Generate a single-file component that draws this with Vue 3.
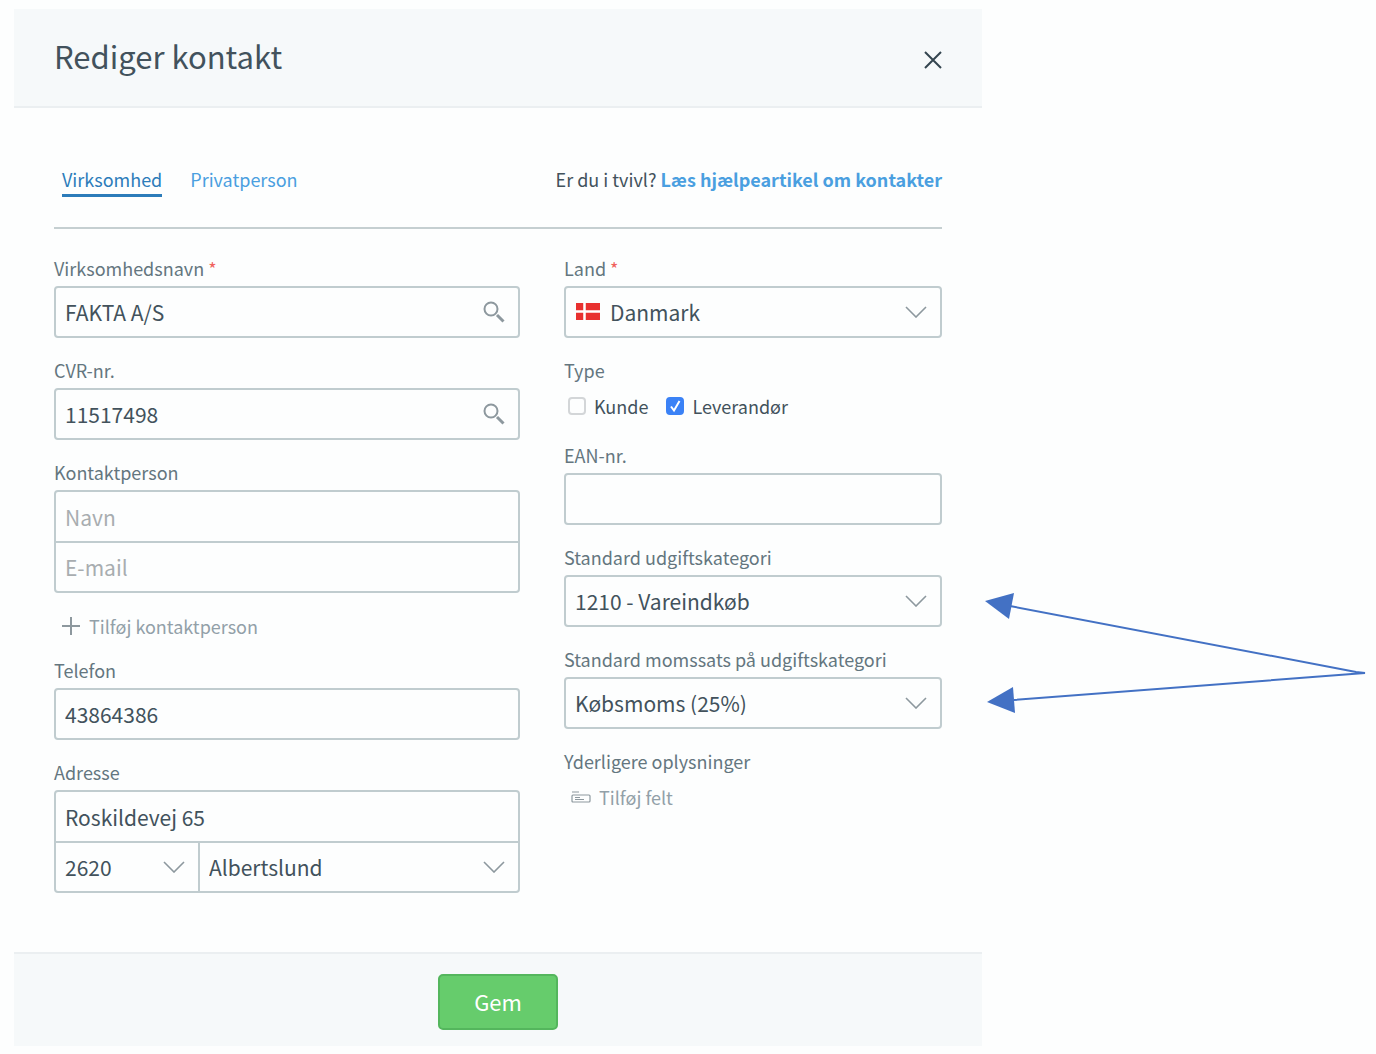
<script setup>
import { ref } from "vue";

const tab = ref("virksomhed");

const contact = ref({
    name: "FAKTA A/S",
    cvr: "11517498",
    person: "",
    email: "",
    phone: "43864386",
    street: "Roskildevej 65",
    zip: "2620",
    city: "Albertslund",
    country: "Danmark",
    customer: false,
    supplier: true,
    ean: "",
    category: "1210 - Vareindkøb",
    vat: "Købsmoms (25%)"
})
</script>

<template>
    <div class="page">
        <form class="dialog" @submit.prevent>
            <header class="dialog-header">
                <h1>Rediger kontakt</h1>
                <button type="button" class="close" aria-label="Luk">
                    <svg width="18" height="18" viewBox="0 0 18 18"><path d="M1 1L17 17M17 1L1 17" /></svg>
                </button>
            </header>

            <div class="dialog-body">
                <div class="top-bar">
                    <nav class="tabs">
                        <a href="#virksomhed" :class="{ active: tab === 'virksomhed' }" @click.prevent="tab = 'virksomhed'">Virksomhed</a>
                        <a href="#privatperson" :class="{ active: tab === 'privatperson' }" @click.prevent="tab = 'privatperson'">Privatperson</a>
                    </nav>
                    <p class="help">Er du i tvivl? <a href="#hjaelp">Læs hjælpeartikel om kontakter</a></p>
                </div>

                <div class="columns">
                    <div class="column">
                        <div class="field">
                            <label for="name">Virksomhedsnavn <span class="required">*</span></label>
                            <div class="control">
                                <input id="name" type="text" v-model="contact.name">
                                <svg class="icon" width="22" height="22" viewBox="0 0 22 22"><circle cx="8" cy="8" r="6.5" /><path class="handle" d="M14 14L20.5 20.5" /></svg>
                            </div>
                        </div>

                        <div class="field">
                            <label for="cvr">CVR-nr.</label>
                            <div class="control">
                                <input id="cvr" type="text" v-model="contact.cvr">
                                <svg class="icon" width="22" height="22" viewBox="0 0 22 22"><circle cx="8" cy="8" r="6.5" /><path class="handle" d="M14 14L20.5 20.5" /></svg>
                            </div>
                        </div>

                        <div class="field">
                            <label for="person">Kontaktperson</label>
                            <div class="group">
                                <input id="person" type="text" placeholder="Navn" v-model="contact.person">
                                <input type="email" placeholder="E-mail" aria-label="E-mail" v-model="contact.email">
                            </div>
                        </div>

                        <button type="button" class="add">
                            <svg width="20" height="20" viewBox="0 0 20 20"><path d="M10 1V19M1 10H19" /></svg>
                            Tilføj kontaktperson
                        </button>

                        <div class="field">
                            <label for="phone">Telefon</label>
                            <div class="control">
                                <input id="phone" type="tel" v-model="contact.phone">
                            </div>
                        </div>

                        <div class="field">
                            <label for="street">Adresse</label>
                            <div class="group">
                                <input id="street" type="text" v-model="contact.street">
                                <div class="city-row">
                                    <div class="control">
                                        <select aria-label="Postnummer" v-model="contact.zip"><option>2620</option></select>
                                        <svg class="icon chevron" width="22" height="12" viewBox="0 0 22 12"><path d="M1 1L11 11L21 1" /></svg>
                                    </div>
                                    <div class="control">
                                        <select aria-label="By" v-model="contact.city"><option>Albertslund</option></select>
                                        <svg class="icon chevron" width="22" height="12" viewBox="0 0 22 12"><path d="M1 1L11 11L21 1" /></svg>
                                    </div>
                                </div>
                            </div>
                        </div>
                    </div>

                    <div class="column">
                        <div class="field">
                            <label for="country">Land <span class="required">*</span></label>
                            <div class="control">
                                <svg class="flag" width="24" height="17" viewBox="0 0 24 17">
                                    <rect width="24" height="17" fill="#e8302f" />
                                    <path d="M8.5 0V17M0 8.5H24" stroke="#fff" stroke-width="2.5" />
                                </svg>
                                <select id="country" class="with-flag" v-model="contact.country"><option>Danmark</option></select>
                                <svg class="icon chevron" width="22" height="12" viewBox="0 0 22 12"><path d="M1 1L11 11L21 1" /></svg>
                            </div>
                        </div>

                        <fieldset class="field">
                            <legend>Type</legend>
                            <div class="checks">
                                <label><input type="checkbox" v-model="contact.customer"> Kunde</label>
                                <label><input type="checkbox" v-model="contact.supplier"> Leverandør</label>
                            </div>
                        </fieldset>

                        <div class="field">
                            <label for="ean">EAN-nr.</label>
                            <div class="control">
                                <input id="ean" type="text" v-model="contact.ean">
                            </div>
                        </div>

                        <div class="field">
                            <label for="category">Standard udgiftskategori</label>
                            <div class="control">
                                <select id="category" v-model="contact.category"><option>1210 - Vareindkøb</option></select>
                                <svg class="icon chevron" width="22" height="12" viewBox="0 0 22 12"><path d="M1 1L11 11L21 1" /></svg>
                            </div>
                        </div>

                        <div class="field">
                            <label for="vat">Standard momssats på udgiftskategori</label>
                            <div class="control">
                                <select id="vat" v-model="contact.vat"><option>Købsmoms (25%)</option></select>
                                <svg class="icon chevron" width="22" height="12" viewBox="0 0 22 12"><path d="M1 1L11 11L21 1" /></svg>
                            </div>
                        </div>

                        <div class="extra">
                            <h2>Yderligere oplysninger</h2>
                            <button type="button" class="add">
                                <svg class="thin" width="20" height="12" viewBox="0 0 20 12"><path d="M1 1H8M2 4H18Q19 4 19 5V10Q19 11 18 11H2Q1 11 1 10V5Q1 4 2 4ZM4 6.5H9M4 8.5H13" /></svg>
                                Tilføj felt
                            </button>
                        </div>
                    </div>
                </div>
            </div>

            <footer class="dialog-footer">
                <button type="submit" class="save">Gem</button>
            </footer>
        </form>

        <svg class="arrows" viewBox="0 0 394 140" aria-hidden="true">
            <path class="line" d="M28 26L374 92L383 93L32 120" />
            <path class="head" d="M3 21L32 13L27 39Z" />
            <path class="head" d="M5 122L31 107L33 133Z" />
        </svg>
    </div>
</template>

<style>
body {
    margin: 0;
    background: #fdfefe;
}
</style>

<style scoped>
.page {
    display: grid;
    grid-template-columns: 968fr 394fr;
    align-items: start;
    padding: 9px 0 8px 14px;
    font-family: "Noto Sans CJK SC", "Noto Sans", sans-serif;
    font-size: 18px;
    line-height: 24px;
    color: #42525c;
}

svg {
    flex: none;
    fill: none;
    stroke: #8d989e;
    stroke-width: 2;
}

.dialog-header {
    display: flex;
    align-items: center;
    justify-content: space-between;
    padding: 20px 40px 16px;
    background: #f6f9fa;
    border-bottom: 2px solid #ebeff1;
}

h1 {
    margin: 0;
    padding-bottom: 8px;
    font-size: 31px;
    line-height: 53px;
    font-weight: 400;
}

button {
    font: inherit;
    cursor: pointer;
}

.close {
    display: flex;
    padding: 0;
    border: 0;
    background: none;
}

.close svg {
    stroke: #34454f;
}

.dialog-body {
    padding: 59px 40px;
}

.top-bar {
    display: flex;
    justify-content: space-between;
    padding: 0 0 30px 8px;
    border-bottom: 2px solid #c5cfd1;
}

.tabs {
    display: flex;
    gap: 28px;
}

a {
    color: #4a9fe0;
    text-decoration: none;
}

.tabs a {
    padding-bottom: 3px;
    border-bottom: 3px solid transparent;
}

.tabs a.active {
    color: #2c7cba;
    border-color: #2c7cba;
}

.help {
    margin: 0;
}

.help a {
    font-weight: 700;
}

.columns {
    display: grid;
    grid-template-columns: 466fr 378fr;
    gap: 44px;
    padding-top: 27px;
}

.column {
    display: flex;
    flex-direction: column;
    gap: 20px;
    min-width: 0;
}

.field {
    display: flex;
    flex-direction: column;
    gap: 6px;
    min-width: 0;
    margin: 0;
    padding: 0;
    border: 0;
}

.field > label,
legend,
h2 {
    margin: 0;
    padding: 0;
    font-size: 18px;
    font-weight: 400;
    color: #64767f;
}

.required {
    color: #f0625d;
}

.control {
    position: relative;
    min-width: 0;
}

.control .icon {
    position: absolute;
    right: 15px;
    top: 50%;
    transform: translateY(-50%);
    pointer-events: none;
}

.control .chevron {
    stroke-width: 1.6;
}

.handle {
    stroke-width: 3;
}

.flag {
    position: absolute;
    left: 12px;
    top: 17px;
    stroke: none;
    pointer-events: none;
}

input[type="text"],
input[type="tel"],
input[type="email"],
select {
    display: block;
    width: 100%;
    height: 52px;
    margin: 0;
    padding: 0 9px;
    font: inherit;
    font-size: 21px;
    color: #42525c;
    background: transparent;
    border: 2px solid #c0cccf;
    border-radius: 4px;
    box-sizing: border-box;
    appearance: none;
}

select.with-flag {
    padding-left: 44px;
}

input::placeholder {
    color: #a8adb0;
    opacity: 1;
}

.group {
    border: 2px solid #c0cccf;
    border-radius: 4px;
}

.group input,
.group select {
    height: 49px;
    border: 0;
}

.group > input + input {
    height: 50px;
    border-top: 2px solid #c0cccf;
    border-radius: 0;
}

.city-row {
    display: grid;
    grid-template-columns: 142fr 320fr;
    border-top: 2px solid #c0cccf;
}

.city-row select {
    height: 48px;
}

.city-row .control + .control {
    border-left: 2px solid #c0cccf;
}

.city-row .icon {
    right: 13px;
}

.checks {
    display: flex;
    align-items: center;
    gap: 18px;
    height: 35px;
    padding: 6px 0 0 4px;
}

.checks label {
    display: flex;
    align-items: center;
    gap: 8px;
}

.checks input {
    width: 18px;
    height: 18px;
    margin: 0;
    border: 2px solid #d3d6d8;
    border-radius: 4px;
    appearance: none;
}

.checks input:checked {
    border-color: #3b82f6;
    background: #3b82f6 url("data:image/svg+xml,%3Csvg xmlns='http://www.w3.org/2000/svg' viewBox='0 0 14 14'%3E%3Cpath d='M3 7.5L6 11.5L11.5 2' fill='none' stroke='white' stroke-width='2'/%3E%3C/svg%3E") center / 14px 14px no-repeat;
}

.add {
    display: flex;
    align-items: center;
    align-self: flex-start;
    gap: 8px;
    height: 25px;
    padding: 0 0 0 7px;
    color: #92a0a8;
    background: none;
    border: 0;
}

.add svg.thin {
    stroke-width: 1.2;
}

.extra {
    display: flex;
    flex-direction: column;
    gap: 11px;
}

.dialog-footer {
    display: flex;
    justify-content: center;
    padding: 20px 20px 16px;
    background: #f6f9fa;
    border-top: 2px solid #ebeff1;
}

.save {
    min-width: 120px;
    height: 56px;
    padding: 0 20px 2px;
    font-size: 22px;
    color: #fff;
    background: #66cc6c;
    border: 2px solid #54b65d;
    border-radius: 5px;
}

.arrows {
    width: 100%;
    margin-top: 571px;
}

.arrows .line {
    stroke: #4371c4;
}

.arrows .head {
    fill: #4371c4;
    stroke: none;
}
</style>
